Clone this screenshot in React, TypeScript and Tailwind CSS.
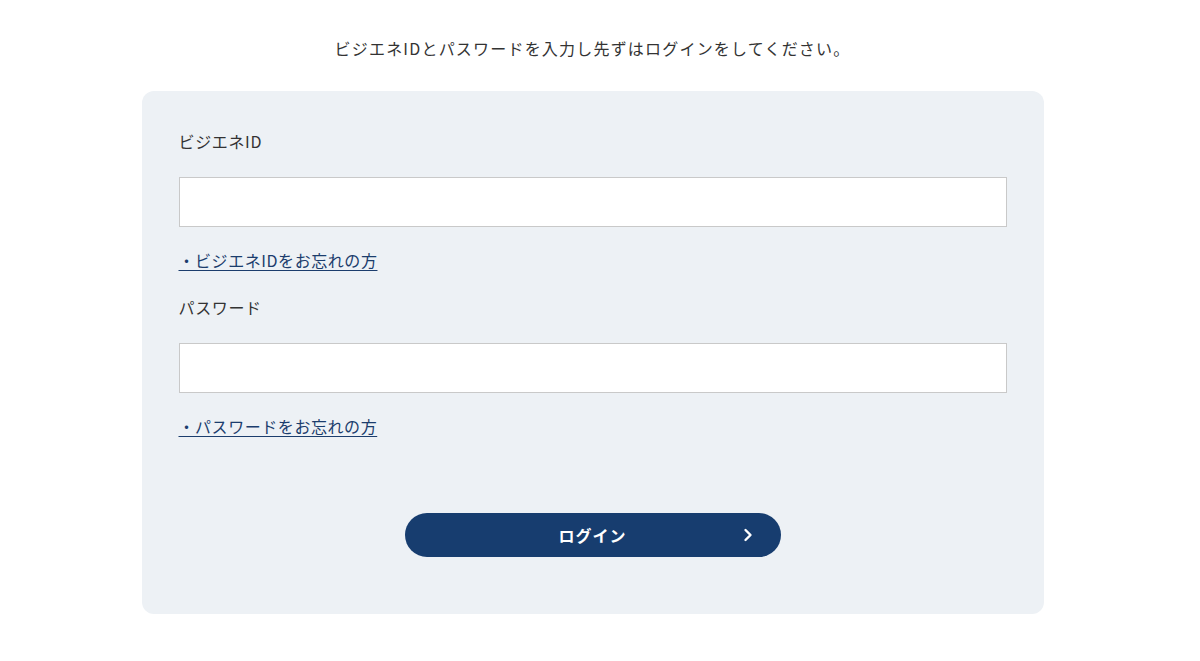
import React from 'react';

export default function App() {
  return (
    <div
      className="min-h-[661px] w-[1185px] bg-white text-[#333333]"
      style={{ fontFamily: '"Noto Sans CJK JP", "Noto Sans", sans-serif' }}
    >
      {/* Intro */}
      <p className="pt-[36px] text-center text-[16px] leading-[24px] tracking-[0.075em]">
        ビジエネIDとパスワードを入力し先ずはログインをしてください。
      </p>

      {/* Login panel */}
      <div className="mx-auto mt-[31px] w-[902px] rounded-[12px] bg-[#edf1f5] px-[37px] pt-[38px] pb-[57px]">
        <label className="block text-[16px] leading-[24px] tracking-[0.04em]">ビジエネID</label>
        <input
          type="text"
          className="mt-[24px] block h-[50px] w-full border border-[#c9c9c9] bg-white px-3 text-[16px] outline-none"
        />
        <a href="#" className="mt-[21px] block w-fit text-[16px] leading-[24px] tracking-[0.035em] text-[#1b3d6d] underline underline-offset-[3px]">
          ・ビジエネIDをお忘れの方
        </a>

        <label className="mt-[23px] block text-[16px] leading-[24px] tracking-[0.04em]">パスワード</label>
        <input
          type="password"
          className="mt-[24px] block h-[50px] w-full border border-[#c9c9c9] bg-white px-3 text-[16px] outline-none"
        />
        <a href="#" className="mt-[21px] block w-fit text-[16px] leading-[24px] tracking-[0.035em] text-[#1b3d6d] underline underline-offset-[3px]">
          ・パスワードをお忘れの方
        </a>

        <div className="mt-[75px] flex justify-center">
          <button
            type="button"
            className="relative flex h-[44px] w-[376px] items-center justify-center rounded-full bg-[#173d6f] pb-[1px] text-[16px] font-bold tracking-[0.06em] text-white"
          >
            ログイン
            <svg
              className="absolute right-[28px] top-1/2 -translate-y-1/2"
              width="10"
              height="14"
              viewBox="0 0 10 14"
              fill="none"
            >
              <path d="M2.5 2l5 5-5 5" stroke="white" strokeWidth="2.4" strokeLinecap="round" strokeLinejoin="round" />
            </svg>
          </button>
        </div>
      </div>
    </div>
  );
}
